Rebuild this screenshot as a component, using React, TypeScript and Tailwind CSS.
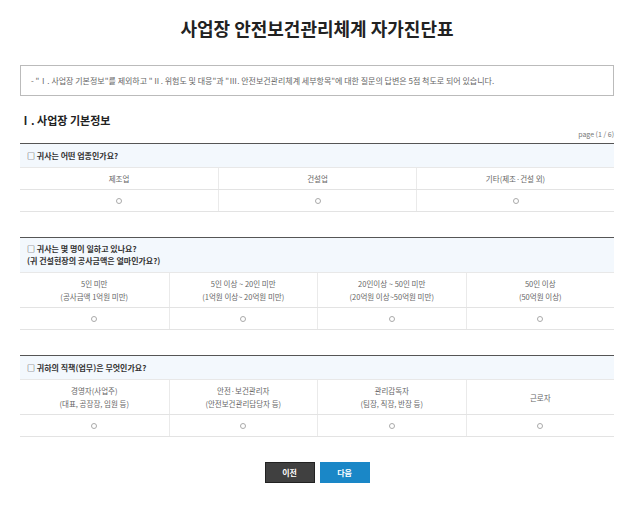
const FONT = { fontFamily: '"Noto Sans CJK KR", "Noto Sans", sans-serif' };

interface Question {
  title: string[];
  options: string[][];
}

const questions: Question[] = [
  {
    title: ["□ 귀사는 어떤 업종인가요?"],
    options: [["제조업"], ["건설업"], ["기타(제조·건설 외)"]],
  },
  {
    title: ["□ 귀사는 몇 명이 일하고 있나요?", "(귀 건설현장의 공사금액은 얼마인가요?)"],
    options: [
      ["5인 미만", "(공사금액 1억원 미만)"],
      ["5인 이상 ~ 20인 미만", "(1억원 이상~ 20억원 미만)"],
      ["20인이상 ~ 50인 미만", "(20억원 이상~50억원 미만)"],
      ["50인 이상", "(50억원 이상)"],
    ],
  },
  {
    title: ["□ 귀하의 직책(업무)은 무엇인가요?"],
    options: [
      ["경영자(사업주)", "(대표, 공장장, 임원 등)"],
      ["안전·보건관리자", "(안전보건관리담당자 등)"],
      ["관리감독자", "(팀장, 직장, 반장 등)"],
      ["근로자"],
    ],
  },
];

const QuestionTable = ({ q }: { q: Question }) => {
  const multi = q.options.some((o) => o.length > 1);
  const cols = q.options.length === 3 ? "grid-cols-3" : "grid-cols-4";
  return (
    <div className="border-t border-[#555] border-b border-b-[#e3e3e3]">
      <div
        className={`flex flex-col justify-center bg-[#f3f8fd] px-[7px] text-[8px] font-bold leading-[12px] text-[#333] ${
          q.title.length > 1 ? "h-[34px]" : "h-[23px]"
        }`}
      >
        {q.title.map((t) => (
          <div key={t}>{t}</div>
        ))}
      </div>
      <div className={`grid ${cols} border-t border-[#e8e8e8]`}>
        {q.options.map((o, i) => (
          <div
            key={i}
            className={`flex flex-col items-center justify-center text-[7.5px] leading-[13px] text-[#666] ${
              multi ? "h-[34px]" : "h-[21px]"
            } ${i > 0 ? "border-l border-[#eaeaea]" : ""}`}
          >
            {o.map((line) => (
              <div key={line}>{line}</div>
            ))}
          </div>
        ))}
      </div>
      <div className={`grid ${cols} border-t border-[#e3e3e3]`}>
        {q.options.map((_, i) => (
          <div
            key={i}
            className={`flex h-[21px] items-center justify-center ${
              i > 0 ? "border-l border-[#eaeaea]" : ""
            }`}
          >
            <span className="block h-[6px] w-[6px] rounded-full border border-[#aaa] bg-white" />
          </div>
        ))}
      </div>
    </div>
  );
};

export default function App() {
  return (
    <div className="min-h-[514px] w-[640px] bg-white" style={FONT}>
      <div className="ml-[20px] w-[594px]">
        <h1 className="pt-[16px] text-center text-[18px] font-bold leading-[24px] text-[#222]">
          사업장 안전보건관리체계 자가진단표
        </h1>
        <div className="mt-[25px] flex h-[31px] items-center border border-[#bbb] px-[10px] text-[8px] text-[#666]">
          - "Ⅰ. 사업장 기본정보"를 제외하고 "Ⅱ. 위험도 및 대응"과 "Ⅲ. 안전보건관리체계 세부항목"에 대한 질문의 답변은 5점 척도로 되어 있습니다.
        </div>
        <h2 className="mt-[17px] text-[11px] font-bold leading-[14px] text-[#222]">Ⅰ. 사업장 기본정보</h2>
        <div className="mt-[2px] text-right text-[7px] leading-[10px] text-[#777]">page (1 / 6)</div>
        <div className="mt-[4px] flex flex-col gap-[25px]">
          {questions.map((q, i) => (
            <QuestionTable key={i} q={q} />
          ))}
        </div>
        <div className="mt-[25px] flex justify-center gap-[5px]">
          <button className="h-[21px] w-[50px] border border-[#222] bg-[#404040] text-[8px] font-bold text-white">
            이전
          </button>
          <button className="h-[21px] w-[50px] bg-[#1a87c7] text-[8px] font-bold text-white">
            다음
          </button>
        </div>
      </div>
    </div>
  );
}
